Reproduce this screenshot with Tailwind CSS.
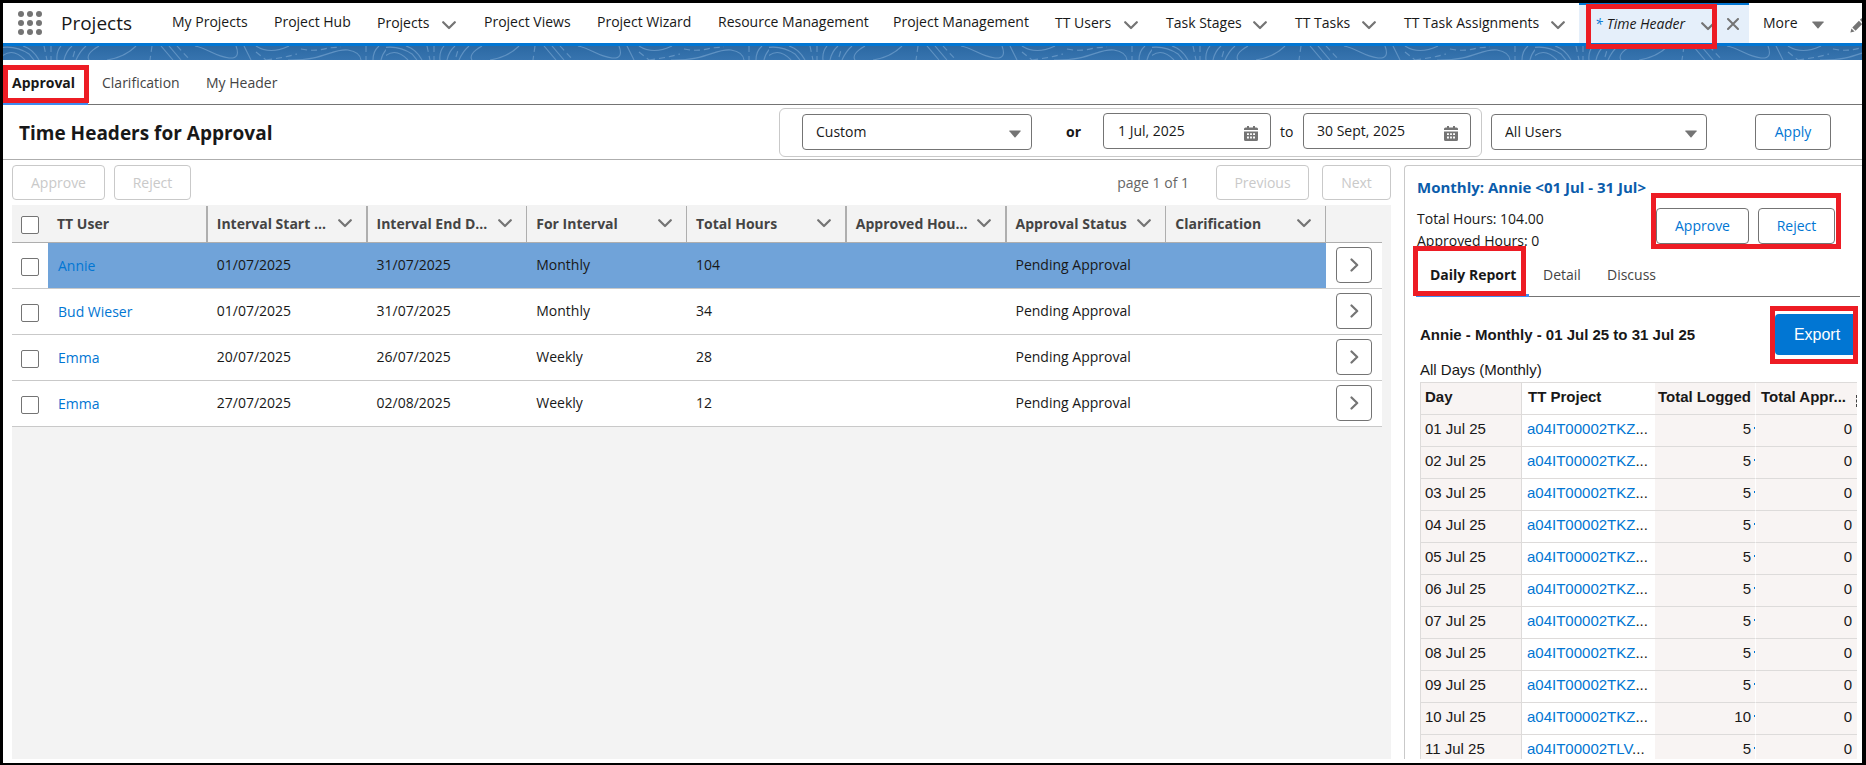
<!doctype html>
<html lang="en">

<head>
    <meta charset="UTF-8">
    <meta name="viewport" content="width=device-width, initial-scale=1.0">
    <title>Time Header | Projects</title>
    <script src="https://cdn.jsdelivr.net/npm/@tailwindcss/browser@4"></script>
</head>

<body class="h-screen overflow-hidden bg-black pt-[3px] pr-1 pb-[2px] pl-[3px] font-['Open_Sans',sans-serif] text-sm text-[#181818]">

    <!-- icon sprite -->
    <svg class="hidden">
        <symbol id="chevron-down" viewBox="0 0 14 9">
            <path d="M1.2 1.2 L7 7 L12.8 1.2" fill="none" stroke="currentColor" stroke-width="2.2" stroke-linecap="round" stroke-linejoin="round" />
        </symbol>
        <symbol id="chevron-right" viewBox="0 0 9 14">
            <path d="M1.5 1.5 L7.2 7 L1.5 12.5" fill="none" stroke="currentColor" stroke-width="2.2" stroke-linecap="round" stroke-linejoin="round" />
        </symbol>
        <symbol id="triangle" viewBox="0 0 12 8">
            <path d="M0.6 0.5 H11.4 Q12 0.6 11.6 1.2 L6.5 7.3 Q6 7.8 5.5 7.3 L0.4 1.2 Q0 0.6 0.6 0.5Z" fill="currentColor" />
        </symbol>
        <symbol id="calendar" viewBox="0 0 14 15">
            <path d="M3 0.5 a1 1 0 0 1 2 0 V1.5 H9 V0.5 a1 1 0 0 1 2 0 V1.5 H12.5 Q14 1.5 14 3 V4 H0 V3 Q0 1.5 1.5 1.5 H3Z" fill="currentColor" />
            <path fill-rule="evenodd" d="M0 5.5 H14 V13.5 Q14 15 12.5 15 H1.5 Q0 15 0 13.5Z M3 7.3V9.1H4.9V7.3Z M6.1 7.3V9.1H7.9V7.3Z M9.1 7.3V9.1H11V7.3Z M3 10.6V12.4H4.9V10.6Z M6.1 10.6V12.4H7.9V10.6Z M9.1 10.6V12.4H11V10.6Z" fill="currentColor" />
        </symbol>
    </svg>

    <div class="flex h-full flex-col overflow-hidden bg-white">

        <!-- global nav -->
        <header class="flex h-10 shrink-0 overflow-x-clip whitespace-nowrap">
            <button type="button" aria-label="App Launcher" class="ml-[14px] flex w-7 shrink-0 items-center text-[#747474]">
                <svg class="ml-px size-6" viewBox="0 0 24 24" fill="currentColor">
                    <circle cx="3" cy="3" r="3" /><circle cx="12" cy="3" r="3" /><circle cx="21" cy="3" r="3" />
                    <circle cx="3" cy="12" r="3" /><circle cx="12" cy="12" r="3" /><circle cx="21" cy="12" r="3" />
                    <circle cx="3" cy="21" r="3" /><circle cx="12" cy="21" r="3" /><circle cx="21" cy="21" r="3" />
                </svg>
            </button>
            <h1 class="ml-4 w-[111px] shrink-0 text-[19px] leading-[41px]">Projects</h1>
            <nav class="flex shrink-0 leading-[38px]">
                <a href="#" class="w-[102px]">My Projects</a>
                <a href="#" class="w-[103px]">Project Hub</a>
                <a href="#" class="flex w-[107px] items-center"><span class="w-[65px]">Projects</span><svg class="mt-1 h-[9px] w-[14px] text-[#747474]"><use href="#chevron-down" /></svg></a>
                <a href="#" class="w-[113px]">Project Views</a>
                <a href="#" class="w-[121px]">Project Wizard</a>
                <a href="#" class="w-[175px]">Resource Management</a>
                <a href="#" class="w-[162px]">Project Management</a>
                <a href="#" class="flex w-[111px] items-center"><span class="w-[69px]">TT Users</span><svg class="mt-1 h-[9px] w-[14px] text-[#747474]"><use href="#chevron-down" /></svg></a>
                <a href="#" class="flex w-[129px] items-center"><span class="w-[87px]">Task Stages</span><svg class="mt-1 h-[9px] w-[14px] text-[#747474]"><use href="#chevron-down" /></svg></a>
                <a href="#" class="flex w-[109px] items-center"><span class="w-[67px]">TT Tasks</span><svg class="mt-1 h-[9px] w-[14px] text-[#747474]"><use href="#chevron-down" /></svg></a>
                <a href="#" class="flex w-[175px] items-center"><span class="w-[147px]">TT Task Assignments</span><svg class="mt-1 h-[9px] w-[14px] text-[#747474]"><use href="#chevron-down" /></svg></a>
                <div class="relative flex w-[170px] items-center border-t-2 border-[#0176d3] bg-[#e5effa]">
                    <a href="#" class="flex w-[122px] items-center pl-4 italic"><span class="mr-1 text-[#0176d3]">*</span>Time Header</a>
                    <svg class="mt-1 h-[9px] w-[14px] text-[#747474]"><use href="#chevron-down" /></svg>
                    <button type="button" aria-label="Close tab" class="ml-3 text-[#747474]">
                        <svg class="size-3" viewBox="0 0 12 12" fill="none" stroke="currentColor" stroke-width="2" stroke-linecap="round"><path d="M1 1 L11 11 M11 1 L1 11" /></svg>
                    </button>
                    <div class="pointer-events-none absolute -top-px left-[7px] z-10 h-[45px] w-[131px] border-5 border-[#ed1c24]"></div>
                </div>
                <button type="button" class="ml-[14px] flex w-[87px] items-center"><span class="w-[49px] text-left">More</span><svg class="mt-1 h-2 w-3 text-[#747474]"><use href="#triangle" /></svg></button>
                <button type="button" aria-label="Edit nav items" class="text-[#747474]">
                    <svg class="mt-1 size-[15px]" viewBox="0 0 15 15" fill="currentColor"><path d="M0.4 14.6 L1.4 10.4 L4.6 13.6Z M2.3 9.4 L8.9 2.8 L12.2 6.1 L5.6 12.7Z M9.9 1.8 L11.2 0.5 Q11.7 0 12.2 0.5 L14.5 2.8 Q15 3.3 14.5 3.8 L13.2 5.1Z" /></svg>
                </button>
            </nav>
        </header>

        <!-- brand band -->
        <div class="h-[17px] shrink-0 border-t-3 border-[#0176d3] bg-linear-to-b from-[#2c69a3] to-[#3774af]">
            <svg class="block h-[14px] w-full" fill="none">
                <defs>
                    <pattern id="topo" width="383" height="14" patternUnits="userSpaceOnUse">
                        <g fill="none" stroke="#5f92c3" stroke-width="1.1">
                            <path d="M-5 14 Q8 -1 22 14 M-14 5 Q8 -4 26 8 L31 14 M20 0 Q30 3 36 14 M54 14 Q53 6 58 0 M61 14 Q63 5 69 0 M73 14 Q77 5 83 0" />
                            <path d="M96 0 Q82 8 86 14 M104 14 Q122 11 133 0 M158 0 L170 14 M166 0 L178 14" />
                            <path d="M192 0 C206 3 211 10 226 12 Q238 13 233 0 M241 0 L248 14 M253 0 Q267 9 286 0 M285 14 C320 15 330 2 345 4 Q357 6 358 14" />
                            <path d="M370 14 Q370 5 376 0 M378 14 Q380 6 385 2" />
                            <path d="M41 0 L44 14 M48 0 L48 14 M149 0 L147 14 M174 0 L187 14 M253 6 L263 14 M263 14 Q279 12 294 8 M298 3 Q312 6 325 2 L338 1 M363 0 V14 M70 11 L72 4" stroke-dasharray="6 4" />
                        </g>
                    </pattern>
                </defs>
                <rect width="100%" height="14" fill="url(#topo)" />
            </svg>
        </div>

        <!-- page tabs -->
        <nav class="relative flex h-[45px] shrink-0 border-b border-[#747474] leading-[46px] text-[#444]">
            <a href="#" class="w-[85px] pl-[9px] font-bold text-[#181818]">Approval</a>
            <a href="#" class="ml-[14px] w-[104px]">Clarification</a>
            <a href="#">My Header</a>
            <div class="absolute -bottom-px left-0 h-[3px] w-[85px] bg-[#3f8cf0]"></div>
            <div class="pointer-events-none absolute top-[5px] left-0 h-[38px] w-[86px] border-5 border-[#ed1c24]"></div>
        </nav>

        <!-- title and filters -->
        <div class="flex h-[55px] shrink-0 items-center border-b border-[#aeaeae] pr-[31px]">
            <h2 class="grow pt-[3px] pl-4 text-[19px] font-bold">Time Headers for Approval</h2>
            <form class="flex items-center">
                <div class="flex h-[49px] items-center rounded-md border border-[#c9c9c9] pr-[10px] pl-[22px]">
                    <div class="relative w-[230px]">
                        <select aria-label="Period" class="h-9 w-full appearance-none rounded border border-[#747474] bg-white px-[13px]">
                            <option>Custom</option>
                        </select>
                        <svg class="pointer-events-none absolute top-4 right-[11px] h-2 w-3 text-[#747474]"><use href="#triangle" /></svg>
                    </div>
                    <span class="ml-[34px] w-[37px] font-bold">or</span>
                    <div class="relative mb-[2px] w-[168px]">
                        <input type="text" aria-label="From" value="1 Jul, 2025" class="h-9 w-full rounded border border-[#747474] px-[14px] pb-[2px]">
                        <svg class="absolute top-[13px] right-[13px] h-[15px] w-[14px] text-[#747474]"><use href="#calendar" /></svg>
                    </div>
                    <label for="date-to" class="ml-[9px] w-[23px]">to</label>
                    <div class="relative mb-[2px] w-[168px]">
                        <input type="text" id="date-to" value="30 Sept, 2025" class="h-9 w-full rounded border border-[#747474] px-[13px] pb-[2px]">
                        <svg class="absolute top-[13px] right-[13px] h-[15px] w-[14px] text-[#747474]"><use href="#calendar" /></svg>
                    </div>
                </div>
                <div class="relative ml-[9px] w-[216px]">
                    <select aria-label="Users" class="h-9 w-full appearance-none rounded border border-[#747474] bg-white px-[13px]">
                        <option>All Users</option>
                    </select>
                    <svg class="pointer-events-none absolute top-4 right-[10px] h-2 w-3 text-[#747474]"><use href="#triangle" /></svg>
                </div>
                <button type="button" class="ml-12 h-9 w-[76px] rounded border border-[#747474] text-[#0176d3]">Apply</button>
            </form>
        </div>

        <div class="flex min-h-0 grow gap-[13px] pb-1">

            <!-- time headers list -->
            <section class="flex grow flex-col pt-[5px] pl-[9px]">
                <div class="mb-[5px] flex h-[35px] shrink-0 items-center text-[#c9c9c9]">
                    <button type="button" disabled class="h-[35px] w-[93px] rounded border border-[#c9c9c9]">Approve</button>
                    <button type="button" disabled class="ml-[9px] h-[35px] w-[77px] rounded border border-[#c9c9c9]">Reject</button>
                    <span class="mr-[27px] ml-auto text-[#666]">page 1 of 1</span>
                    <button type="button" disabled class="h-[35px] w-[93px] rounded border border-[#c9c9c9]">Previous</button>
                    <button type="button" disabled class="ml-[13px] h-[35px] w-[69px] rounded border border-[#c9c9c9]">Next</button>
                </div>
                <div class="grow bg-[#f3f3f3] pr-[9px]">
                    <table class="w-full table-fixed border-separate border-spacing-0 text-left">
                        <thead>
                            <tr id="list-head">
                                <th class="h-[38px] w-9 border-b border-[#aeaeae] pl-[9px]"><input type="checkbox" aria-label="Select all" class="mt-[3px] block size-[18px] appearance-none rounded-[2px] border border-[#747474] bg-white"></th>
                            </tr>
                        </thead>
                        <tbody id="list-body"></tbody>
                    </table>
                </div>
            </section>

            <!-- detail panel -->
            <aside class="mt-[5px] flex w-[458px] shrink-0 flex-col overflow-hidden rounded-tl border-t border-l border-[#c9c9c9]">
                <div class="relative z-10 flex h-[86px] shrink-0 pl-3">
                    <div class="w-[239px]">
                        <h3 class="mt-[11px] text-[15px] leading-5 font-bold whitespace-nowrap text-[#0b5cab]">Monthly: Annie &lt;01 Jul - 31 Jul&gt;</h3>
                        <p class="mt-[11px] leading-[22px]">Total Hours: 104.00</p>
                        <p class="leading-[22px]">Approved Hours: 0</p>
                    </div>
                    <div class="mt-[42px] flex gap-[9px] text-[#0176d3]">
                        <button type="button" class="h-9 w-[93px] rounded border border-[#747474]">Approve</button>
                        <button type="button" class="h-9 w-[77px] rounded border border-[#747474]">Reject</button>
                    </div>
                    <div class="pointer-events-none absolute top-[27px] left-[246px] h-[56px] w-[190px] border-5 border-[#ed1c24]"></div>
                </div>
                <nav class="relative z-10 mr-[2px] ml-[11px] flex h-[45px] shrink-0 border-b border-[#747474] leading-[46px] text-[#444]">
                    <a href="#" class="w-[113px] pl-[14px] font-bold text-[#181818]">Daily Report</a>
                    <a href="#" class="ml-[14px] w-16">Detail</a>
                    <a href="#">Discuss</a>
                    <div class="absolute -bottom-px left-0 h-[3px] w-[113px] bg-[#3f8cf0]"></div>
                    <div class="pointer-events-none absolute -top-[6px] -left-[3px] h-[50px] w-[113px] border-5 border-[#ed1c24]"></div>
                </nav>
                <div class="min-h-0 grow overflow-hidden pr-[5px] pl-[15px] font-['Liberation_Sans',sans-serif] text-[15px]">
                    <div class="relative mt-[17px] flex h-[41px] items-center justify-between">
                        <h4 class="font-bold">Annie - Monthly - 01 Jul 25 to 31 Jul 25</h4>
                        <button type="button" class="mr-1 h-[41px] w-[78px] rounded-l bg-[#0176d3] pl-[6px] text-base text-white">Export</button>
                        <div class="pointer-events-none absolute -top-2 -right-px h-[58px] w-[88px] border-5 border-[#ed1c24]"></div>
                    </div>
                    <p class="mt-[5px] mb-[2px] leading-5">All Days (Monthly)</p>
                    <table class="w-full table-fixed border-separate border-spacing-0 border-t border-l border-[#dddbda]">
                        <thead>
                            <tr class="text-left whitespace-nowrap">
                                <th class="h-8 w-[101px] border-r border-b border-[#dddbda] bg-[#f8f4f3] px-1 pb-[3px]">Day</th>
                                <th class="w-[133px] border-b border-[#dddbda] px-[6px] pb-[3px]">TT Project</th>
                                <th class="w-[101px] border-r border-r-white border-b border-b-[#dddbda] bg-[#f8f4f3] pr-1 pb-[3px] text-right">Total Logged</th>
                                <th class="relative border-b border-[#dddbda] bg-[#f8f4f3] px-[5px] pb-[3px]">Total Appr...<span class="absolute top-3 right-0 h-3 border-r border-dashed border-[#444]"></span></th>
                            </tr>
                        </thead>
                        <tbody id="report-body"></tbody>
                    </table>
                </div>
            </aside>
        </div>
    </div>

    <script>
        const columns = ['TT User', 'Interval Start ...', 'Interval End D...', 'For Interval', 'Total Hours', 'Approved Hou...', 'Approval Status', 'Clarification'];
        // columns whose resize handle is drawn thicker
        const thick = [0, 1, 4, 5];
        const headers = [
            ['Annie', '01/07/2025', '31/07/2025', 'Monthly', '104', '', 'Pending Approval', ''],
            ['Bud Wieser', '01/07/2025', '31/07/2025', 'Monthly', '34', '', 'Pending Approval', ''],
            ['Emma', '20/07/2025', '26/07/2025', 'Weekly', '28', '', 'Pending Approval', ''],
            ['Emma', '27/07/2025', '02/08/2025', 'Weekly', '12', '', 'Pending Approval', ''],
        ];

        const chevron = '<svg class="h-[9px] w-[14px] shrink-0 text-[#747474]"><use href="#chevron-down" /></svg>';

        document.getElementById('list-head').insertAdjacentHTML('beforeend', columns.map((name, i) => `
            <th class="border-b border-[#aeaeae] p-0 text-[#444]">
                <div class="flex h-9 items-center justify-between ${thick.includes(i) ? 'border-r-2' : 'border-r'} border-[#aeaeae] pr-[14px] pl-[9px] whitespace-nowrap"><span>${name}</span>${i ? chevron : ''}</div>
            </th>`).join('') + '<th class="w-14 border-b border-[#aeaeae]"></th>');

        document.getElementById('list-body').innerHTML = headers.map((row, r) => `
            <tr class="bg-white">
                <td class="h-[46px] border-b border-[#c9c9c9] pl-[9px]"><input type="checkbox" aria-label="Select ${row[0]}" class="mt-[3px] block size-[18px] appearance-none rounded-[2px] border border-[#747474] bg-white"></td>
                ${row.map((cell, i) => `<td class="border-b border-[#c9c9c9] ${i ? 'px-[9px] pb-[2px]' : 'px-[10px]'} ${r ? '' : 'bg-[#70a3d9]'}">${i ? cell : `<a href="#" class="text-[#0176d3]">${cell}</a>`}</td>`).join('')}
                <td class="border-b border-[#c9c9c9] pb-px pl-[10px]">
                    <button type="button" aria-label="Open" class="flex size-9 items-center justify-center rounded border border-[#747474] text-[#747474]"><svg class="h-[14px] w-[9px]"><use href="#chevron-right" /></svg></button>
                </td>
            </tr>`).join('');

        const days = [5, 5, 5, 5, 5, 5, 5, 5, 5, 10, 5];
        document.getElementById('report-body').innerHTML = days.map((hours, i) => `
            <tr>
                <td class="h-8 border-r border-b border-[#dddbda] bg-[#f8f4f3] px-1 pb-[3px]">${String(i + 1).padStart(2, '0')} Jul 25</td>
                <td class="border-b border-[#dddbda] px-[5px] pb-[3px]"><a href="#" class="text-[#0176d3]">a04IT00002${i < 10 ? 'TKZ' : 'TLV'}</a>...</td>
                <td class="relative border-r border-r-white border-b border-b-[#dddbda] bg-[#f8f4f3] pr-1 pb-[3px] text-right">${hours}<span class="absolute top-3 right-0 h-[2px] w-px bg-[#0176d3]"></span></td>
                <td class="border-b border-[#dddbda] bg-[#f8f4f3] pr-[5px] pb-[3px] text-right">0</td>
            </tr>`).join('');
    </script>
</body>

</html>
